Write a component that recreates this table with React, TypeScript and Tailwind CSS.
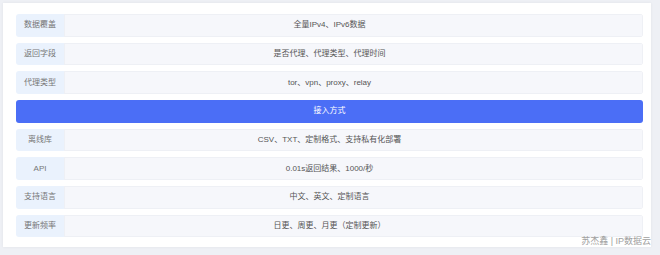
import React from 'react';

type Row = { label: string; value: string };

const topRows: Row[] = [
  { label: '数据覆盖', value: '全量IPv4、IPv6数据' },
  { label: '返回字段', value: '是否代理、代理类型、代理时间' },
  { label: '代理类型', value: 'tor、vpn、proxy、relay' },
];

const bottomRows: Row[] = [
  { label: '离线库', value: 'CSV、TXT、定制格式、支持私有化部署' },
  { label: 'API', value: '0.01s返回结果、1000/秒' },
  { label: '支持语言', value: '中文、英文、定制语言' },
  { label: '更新频率', value: '日更、周更、月更（定制更新）' },
];

const InfoRow: React.FC<Row> = ({ label, value }) => (
  <div className="flex h-[22.5px] rounded-[3px] overflow-hidden">
    <div className="w-[48px] shrink-0 flex items-center justify-center bg-[#eaf2fd] text-[#777] text-[8px]">
      {label}
    </div>
    <div className="flex-1 flex items-center justify-center pr-[48px] bg-[#f6f7fb] border border-[#eef0f5] text-[#555] text-[8px]">
      {value}
    </div>
  </div>
);

const App: React.FC = () => {
  return (
    <div
      className="relative w-[660px] h-[255px] bg-[#eef0f5] pt-[3px] pl-[3px]"
      style={{ fontFamily: '"Liberation Sans", "Noto Sans CJK SC", sans-serif' }}
    >
      <div className="w-[648px] h-[244px] bg-white shadow-[0_0_3px_rgba(0,0,0,0.06)] pl-[13px] pr-[8px] pt-[11px]">
        <div className="flex flex-col gap-[6.2px]">
          {topRows.map((r) => (
            <InfoRow key={r.label} {...r} />
          ))}
          <div className="h-[22.5px] rounded-[3px] bg-[#4b6ef6] flex items-center justify-center text-white text-[8px]">
            接入方式
          </div>
          {bottomRows.map((r) => (
            <InfoRow key={r.label} {...r} />
          ))}
        </div>
      </div>

      {/* watermark */}
      <div className="absolute right-[9px] bottom-[7px] text-[9px] text-[#a0a0a0] [text-shadow:0_0_2px_#fff]">
        苏杰鑫 | IP数据云
      </div>
    </div>
  );
};

export default App;
